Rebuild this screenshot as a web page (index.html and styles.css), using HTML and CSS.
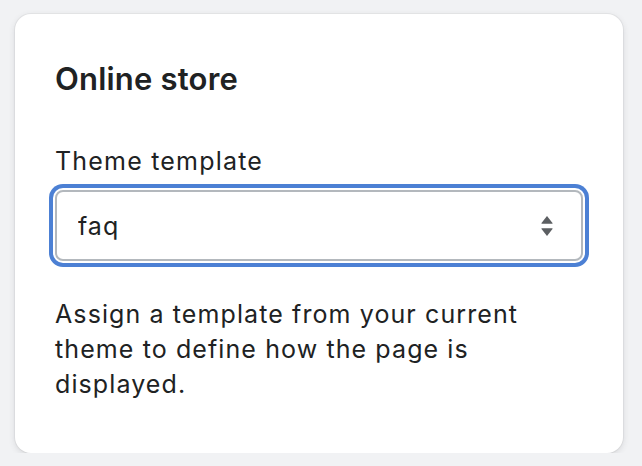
FILE: index.html
```html
<!DOCTYPE html>
<html lang="en">
<head>
    <meta charset="UTF-8">
    <meta name="viewport" content="width=device-width, initial-scale=1.0">
    <title>Online store</title>
    <link rel="stylesheet" href="styles.css">
</head>
<body>

    <!-- Online store card -->
    <div class="card">
        <h2 class="card-title">Online store</h2>

        <div class="field">
            <label class="field-label" for="template">Theme template</label>
            <div class="select-wrap is-focused">
                <select id="template" class="select">
                    <option selected>faq</option>
                    <option>page</option>
                    <option>contact</option>
                </select>
                <svg class="select-arrow" width="12" height="21" viewBox="0 0 12 21">
                    <path d="M6 0.5 L11.5 7.5 Q12 8.3 11 8.3 L1 8.3 Q0 8.3 0.5 7.5 Z"/>
                    <path d="M6 20.5 L11.5 13.5 Q12 12.7 11 12.7 L1 12.7 Q0 12.7 0.5 13.5 Z"/>
                </svg>
            </div>
            <p class="help-text">Assign a template from your current theme to define how the page is displayed.</p>
        </div>
    </div>

</body>
</html>
```

FILE: styles.css
```css
body {
    margin: 0;
    background-color: #f1f2f4;
    font-family: Inter, "Noto Sans", sans-serif;
    color: #202223;
}
.card {
    width: 608px;
    box-sizing: border-box;
    margin: 14px 0 0 15px;
    padding: 45px 40px 51px;
    background-color: #fff;
    border-radius: 16px;
    box-shadow: 0 0 0 1px rgba(63, 63, 68, 0.05), 0 2px 6px rgba(63, 63, 68, 0.15);
}
.card-title {
    margin: 0;
    font-size: 31px;
    line-height: 40px;
    font-weight: 600;
    letter-spacing: 0.2px;
}
.field {
    margin-top: 45px;
}
.field-label {
    display: block;
    font-size: 25px;
    line-height: 35px;
    letter-spacing: 1.2px;
    margin-bottom: 11px;
}
.select-wrap {
    position: relative;
}
.select {
    display: block;
    width: 100%;
    height: 71px;
    box-sizing: border-box;
    padding: 0 60px 0 21px;
    font-family: inherit;
    font-size: 25px;
    letter-spacing: 1px;
    color: #202223;
    background-color: #fff;
    border: 2px solid #b3b8bd;
    border-radius: 8px;
    appearance: none;
    -webkit-appearance: none;
    outline: none;
}
/* focus ring */
.is-focused .select {
    box-shadow: 0 0 0 2px #fff, 0 0 0 6px #4c80d4;
}
.select-arrow {
    position: absolute;
    right: 30px;
    top: 50%;
    transform: translateY(-50%);
    fill: #5c5f62;
    pointer-events: none;
}
.help-text {
    margin: 36px 0 0;
    font-size: 25px;
    line-height: 35px;
    letter-spacing: 1.1px;
}
```
